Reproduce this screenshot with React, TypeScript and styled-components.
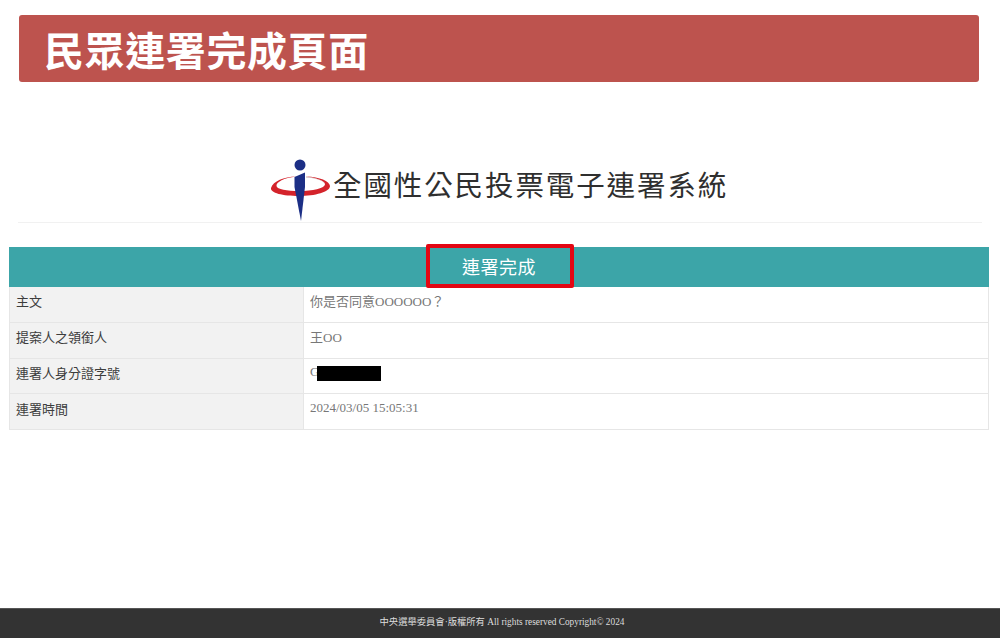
import React from "react";
import styled, { createGlobalStyle } from "styled-components";

const GlobalStyle = createGlobalStyle`
  html, body {
    margin: 0;
    padding: 0;
    background: #fff;
  }
`;

const Page = styled.div`
  width: 1000px;
  height: 638px;
  display: flex;
  flex-direction: column;
  overflow: hidden;
  font-family: "Liberation Serif", "Noto Sans CJK TC", serif;
`;

const Banner = styled.div`
  margin: 15px 21px 0 19px;
  height: 67px;
  padding-left: 25px;
  display: flex;
  align-items: center;
  background: #bd534e;
  border-radius: 3px;
`;

const BannerTitle = styled.h1`
  margin: 0;
  font-family: "Noto Sans CJK TC", sans-serif;
  font-size: 40px;
  font-weight: 700;
  letter-spacing: 0.6px;
  line-height: 1;
  color: #fff;
`;

const Brand = styled.div`
  margin: 76px 18px 0;
  height: 64px;
  padding-left: 252px;
  display: flex;
  align-items: center;
  gap: 3px;
  border-bottom: 1px solid #f1f1f1;
`;

const BrandName = styled.div`
  padding-bottom: 12px;
  font-family: "Noto Sans CJK TC", sans-serif;
  font-size: 28.500px;
  font-weight: 400;
  letter-spacing: 1.900px;
  line-height: 1;
  color: #2f2f2f;
`;

const Logo = () => (
  <svg width="60" height="62" viewBox="0 0 60 62" aria-hidden="true">
    <path d="M1 29C3 22 14 18 26 17.500C14 19 6 23 6.500 27C7 30.500 17 32 29 32C43 32 54 29.500 55 25.500C55.500 22.500 48 19 36 17.500C50 18 59.500 22 60 27C60 33 45 37 29 37C13 37 0 34 1 29Z" fill="#d4232b" />
    <path d="M36 17.500C48 19 55.500 22.500 55 25.500C54 21.500 46 19 36 18.500Z" fill="#c9b0b0" />
    <circle cx="30" cy="6" r="5.500" fill="#1c2f86" />
    <path d="M24.500 18L35 13.500V28L31 62L24.500 28Z" fill="#1c2f86" />
  </svg>
);

const Card = styled.section`
  margin: 24px 11px 0 9px;
  position: relative;
`;

const CardHeader = styled.h2`
  margin: 0;
  height: 40px;
  padding-bottom: 2px;
  box-sizing: border-box;
  display: flex;
  align-items: center;
  justify-content: center;
  background: #3ca5a8;
  font-family: "Noto Sans CJK TC", sans-serif;
  font-size: 18px;
  font-weight: 400;
  letter-spacing: 0.5px;
  color: #fff;
`;

const Highlight = styled.div`
  position: absolute;
  top: -3px;
  left: 417px;
  width: 140px;
  height: 36px;
  border: 4px solid #e30613;
  border-radius: 2px;
`;

const Row = styled.div`
  display: flex;
  height: 35.750px;
  box-sizing: border-box;
  border: 1px solid #e6e6e6;
  border-top: 0;
`;

const Label = styled.div`
  width: 294px;
  box-sizing: border-box;
  padding: 0 0 7px 6px;
  display: flex;
  align-items: center;
  background: #f2f2f2;
  border-right: 1px solid #e6e6e6;
  font-family: "Noto Sans CJK TC", sans-serif;
  font-size: 13px;
  color: #3d3d3d;
`;

const Value = styled.div`
  flex: 1;
  padding: 0 0 7px 6px;
  display: flex;
  align-items: center;
  font-size: 13px;
  color: #777;
`;

const Redacted = styled.span`
  display: inline-block;
  width: 64px;
  height: 15px;
  margin: 3px 0 0 -2px;
  background: #000;
`;

const Footer = styled.footer`
  margin-top: auto;
  height: 30px;
  display: flex;
  align-items: center;
  justify-content: center;
  background: #333;
  border-top: 1px solid #555;
  box-sizing: border-box;
  padding: 0 0 5px 4px;
  font-size: 9.300px;
  color: #ddd;
`;

const rows: { label: string; value: React.ReactNode }[] = [
  { label: "主文", value: "你是否同意OOOOOO？" },
  { label: "提案人之領銜人", value: "王OO" },
  { label: "連署人身分證字號", value: <>G<Redacted /></> },
  { label: "連署時間", value: "2024/03/05 15:05:31" },
];

export default function App() {
  return (
    <Page>
      <GlobalStyle />
      <Banner>
        <BannerTitle>民眾連署完成頁面</BannerTitle>
      </Banner>
      <Brand>
        <Logo />
        <BrandName>全國性公民投票電子連署系統</BrandName>
      </Brand>
      <Card>
        <CardHeader>連署完成</CardHeader>
        <Highlight />
        {rows.map((row) => (
          <Row key={row.label}>
            <Label>{row.label}</Label>
            <Value>{row.value}</Value>
          </Row>
        ))}
      </Card>
      <Footer>中央選舉委員會·版權所有 All rights reserved Copyright© 2024</Footer>
    </Page>
  );
}
